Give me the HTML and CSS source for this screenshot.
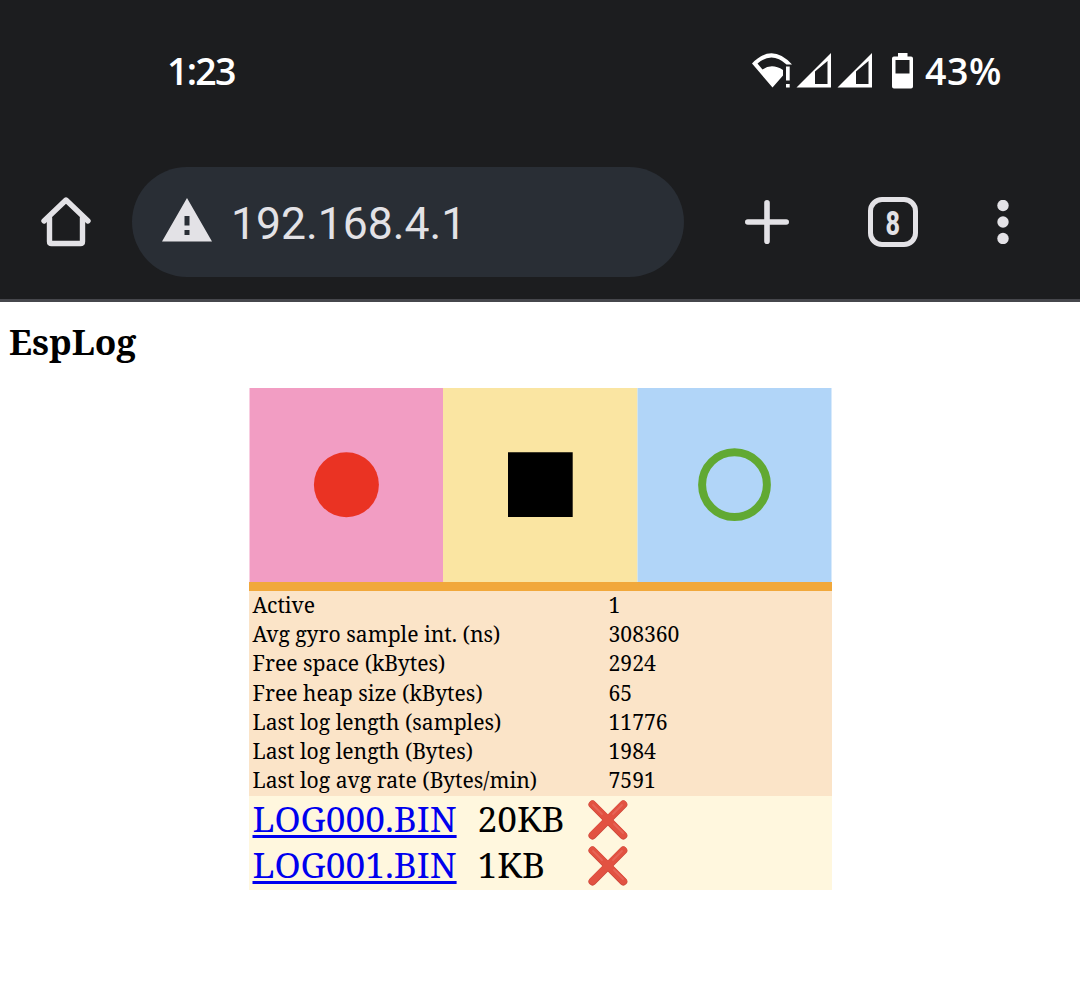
FILE: index.html
```html
<!DOCTYPE html>
<html lang="en">
<head>
<meta charset="utf-8">
<title>EspLog</title>
<link rel="stylesheet" href="styles.css">
</head>
<body>
<header class="chrome">
  <div class="status">
    <span class="clock">1:23</span>
    <svg class="signals" width="164" height="40" viewBox="0 0 164 40">
      <path fill="#fff" d="M0 12.500Q20-8.400 40 13.500H34.500Q20 0 5.500 12.500L10.500 18.500Q20 12 31 19V24.500L20.500 36.500Z"/>
      <path fill="#fff" d="M34 15.500h3.700v14h-3.700zM34 33h3.700v3.500h-3.700z"/>
      <path fill="#fff" fill-rule="evenodd" d="M44.500 36.500L79 2V36.500ZM63 20.500V33H75.500V10ZM85.500 36.500L120 2V36.500ZM104 20.500V33H116.500V10Z"/>
      <path fill="#fff" fill-rule="evenodd" d="M146 2h9.500V5.500H159q2 0 2 2V35.500q0 2-2 2H142q-2 0-2-2V7.500q0-2 2-2h4ZM143.500 9V22.500h14V9Z"/>
    </svg>
    <span class="battery">43%</span>
  </div>
  <div class="toolbar">
    <svg class="home" width="52" height="52" viewBox="0 0 52 52" fill="none" stroke="#e3e2e6" stroke-width="5.400" stroke-linecap="round" stroke-linejoin="round">
      <path d="M4 25L26 4L48 25"/><path d="M9.500 22V45.500Q9.500 47.500 11.500 47.500H40.500Q42.500 47.500 42.500 45.500V22"/>
    </svg>
    <div class="address">
      <svg width="50" height="44" viewBox="0 0 50 44"><path fill="#e3e2e6" fill-rule="evenodd" d="M25 0L50 43.500H0ZM22.500 18v9.500h5V18ZM22.500 32v5h5v-5Z"/></svg>
      <span class="url">192.168.4.1</span>
    </div>
    <svg class="plus" width="44" height="44" viewBox="0 0 44 44" stroke="#e3e2e6" stroke-width="5.600" stroke-linecap="round"><path d="M22 2.800V41.200M2.800 22H41.200"/></svg>
    <div class="tabs"><span>8</span></div>
    <svg class="more" width="12" height="44" viewBox="0 0 12 44" fill="#e3e2e6"><circle cx="6" cy="5.500" r="5.700"/><circle cx="6" cy="22" r="5.700"/><circle cx="6" cy="38.500" r="5.700"/></svg>
  </div>
</header>
<main class="page">
  <h1>EspLog</h1>
  <section class="panel">
    <svg class="controls" width="583" height="194" viewBox="0 0 583 194">
      <path fill="#f29dc3" d="M.5 0H194V194H.5Z"/><path fill="#fae5a2" d="M194 0H388.500V194H194Z"/><path fill="#b1d5f8" d="M388.500 0H582.500V194H388.500Z"/>
      <circle cx="97.400" cy="96.700" r="32.500" fill="#ea3323"/>
      <path fill="#000" d="M259 64.300H323.700V129H259Z"/>
      <circle cx="485.500" cy="96.700" r="32.400" fill="none" stroke="#61a932" stroke-width="8"/>
    </svg>
    <div class="bar"></div>
    <div class="stats">
      <div class="row"><span>Active</span><span>1</span></div>
      <div class="row"><span>Avg gyro sample int. (ns)</span><span>308360</span></div>
      <div class="row"><span>Free space (kBytes)</span><span>2924</span></div>
      <div class="row"><span>Free heap size (kBytes)</span><span>65</span></div>
      <div class="row"><span>Last log length (samples)</span><span>11776</span></div>
      <div class="row"><span>Last log length (Bytes)</span><span>1984</span></div>
      <div class="row"><span>Last log avg rate (Bytes/min)</span><span>7591</span></div>
    </div>
    <div class="files">
      <div class="file"><a href="#">LOG000.BIN</a><span>20KB</span>
        <svg width="40" height="40" viewBox="0 0 40 40" stroke-linecap="round"><path stroke="#c9473a" stroke-width="8" d="M4.500 4.500L35.300 35.500M35.300 4.500L4.500 35.500"/><path stroke="#e25241" stroke-width="7" d="M4.500 4.200L35.300 35M35.300 4.200L4.500 35"/><path stroke="#e66557" stroke-width="1.800" d="M5 5L14 14M26 24L35 33M34 5L25 14"/></svg></div>
      <div class="file"><a href="#">LOG001.BIN</a><span>1KB</span>
        <svg width="40" height="40" viewBox="0 0 40 40" stroke-linecap="round"><path stroke="#c9473a" stroke-width="8" d="M4.500 4.500L35.300 35.500M35.300 4.500L4.500 35.500"/><path stroke="#e25241" stroke-width="7" d="M4.500 4.200L35.300 35M35.300 4.200L4.500 35"/><path stroke="#e66557" stroke-width="1.800" d="M5 5L14 14M26 24L35 33M34 5L25 14"/></svg></div>
    </div>
  </section>
</main>
</body>
</html>
```
FILE: styles.css
```css
* { box-sizing: border-box; }
body { margin: 0; height: 992px; overflow: hidden; background: #fff; color: #000; font-family: "Noto Serif", "DejaVu Serif Condensed", "DejaVu Serif", serif; }
svg { display: block; flex: none; }
.chrome { height: 302px; background: #1c1d1f; border-bottom: 3px solid #46474c; }
.status { height: 145px; display: flex; align-items: center; padding: 0 70px 3px 167px; color: #fff; font: 600 37.500px/40px "Open Sans", sans-serif; }
.clock { width: 585px; letter-spacing: -1.700px; }
.signals { margin-right: 9px; }
.battery { letter-spacing: .5px; }
.toolbar { height: 154px; display: flex; align-items: center; padding-left: 40px; }
.home { margin-right: 40px; }
.address { width: 552px; height: 110px; border-radius: 55px; background: #292e35; display: flex; align-items: center; padding: 0 0 5px 29.500px; gap: 19.500px; }
.url { color: #e3e2e6; font: 400 44.500px/54px Roboto, sans-serif; padding-top: 8px; }
.plus { margin-left: 61px; }
.tabs { width: 50px; height: 50px; margin-left: 79px; border: 5.500px solid #e3e2e6; border-radius: 14px; color: #e3e2e6; font: 800 34px/38px Roboto, sans-serif; display: flex; justify-content: center; align-items: center; }
.tabs span { transform: scaleX(.74); margin-top: 1px; }
.more { margin-left: 79px; }
.page { padding: 14px 0 0; }
h1 { margin: 0; padding-left: 9px; height: 72px; font-size: 35.250px; line-height: 50px; }
.panel { width: 583px; margin-left: 249px; }
.bar { height: 9px; background: #f1a83b; }
.stats { height: 205px; background: #fbe4c8; font-size: 21.150px; line-height: 28px; }
.row { display: grid; grid-template-columns: 356px auto; padding-left: 3.500px; height: 29.200px; white-space: nowrap; }
.files { height: 93.500px; background: #fff7de; font-size: 35.250px; line-height: 44px; }
.file { height: 46px; display: grid; grid-template-columns: 225px 110px 40px; padding-left: 3.500px; align-items: start; white-space: nowrap; }
.file a { color: #0000ee; justify-self: start; text-decoration-thickness: 3px; text-underline-offset: 3px; }
.file svg { margin-top: 4px; }
```
